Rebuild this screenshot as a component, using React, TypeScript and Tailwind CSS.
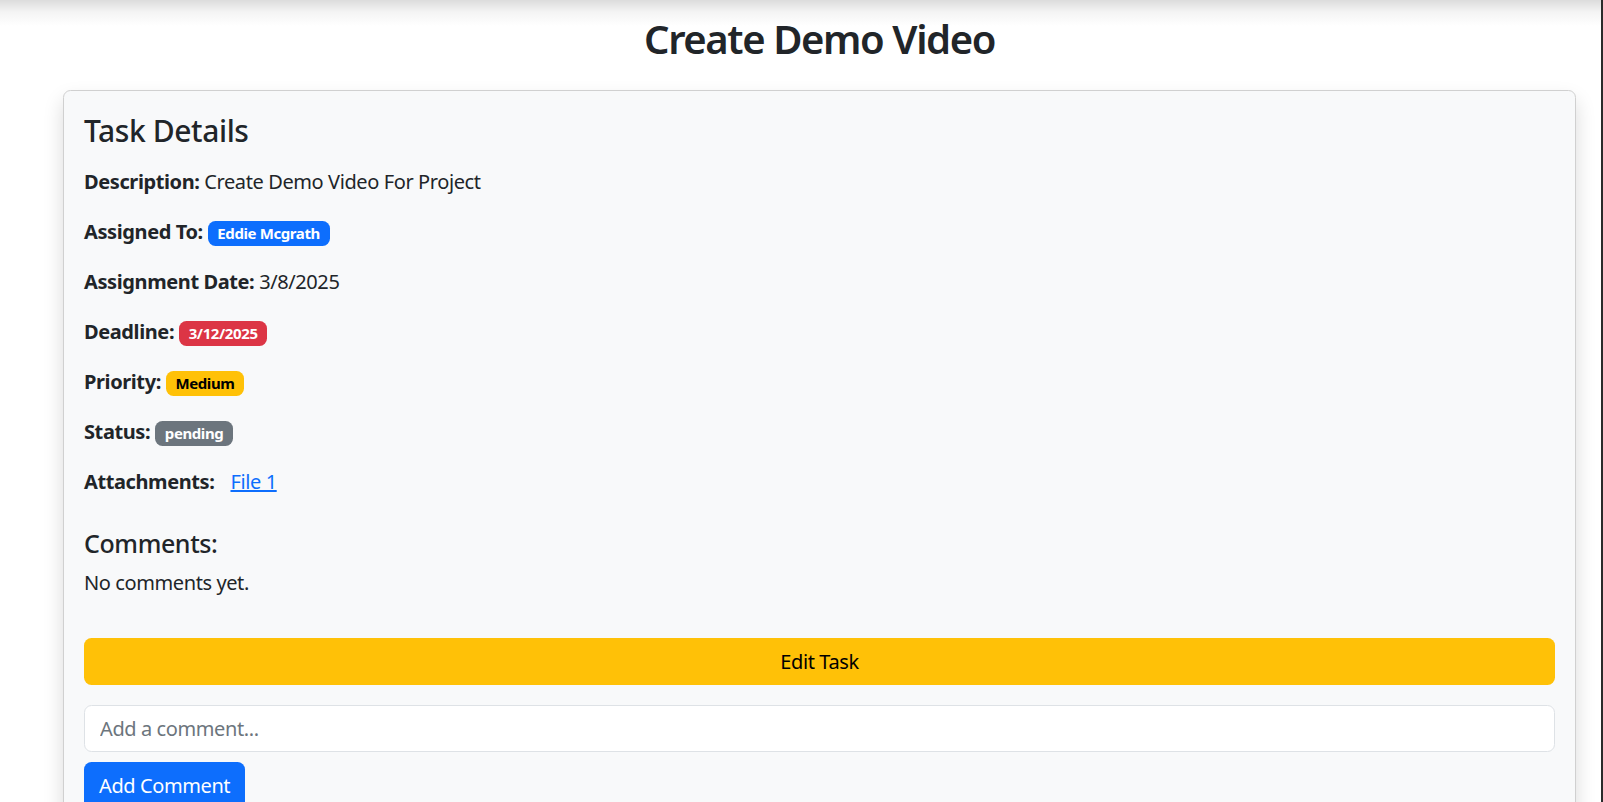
import React from "react";

const font = { fontFamily: '"Noto Sans", "Open Sans", sans-serif' };

function Badge({ children, cls }: { children: React.ReactNode; cls: string }) {
  return (
    <span
      className={
        "inline-block px-[9.75px] py-[5.25px] text-[15px] font-bold leading-none rounded-[7.5px] align-baseline " +
        cls
      }
    >
      {children}
    </span>
  );
}

export default function App() {
  return (
    <div
      className="flex h-[802px] overflow-hidden bg-white text-[#212529] tracking-[-0.025em]"
      style={font}
    >
      <div className="flex-1 bg-[linear-gradient(to_bottom,#dcdcdc_0px,#f4f4f4_12px,#ffffff_26px)]">
        <div className="ml-[63px] w-[1513px]">
          <h2 className="mt-[15px] mb-[27px] text-center text-[40px] leading-[48px] font-semibold tracking-[-0.035em]">
            Create Demo Video
          </h2>
          <div className="rounded-[7.5px] border border-[#d0d0d0] bg-[#f8f9fa] p-5 shadow-[0_10px_20px_rgba(0,0,0,0.15)]">
            <h4 className="mt-[2px] mb-[18px] text-[30px] leading-[36px] font-medium">Task Details</h4>
            <p className="mb-5 text-[20px] leading-[30px]">
              <strong className="font-bold">Description:</strong> Create Demo Video For Project
            </p>
            <p className="mb-5 text-[20px] leading-[30px]">
              <strong className="font-bold">Assigned To:</strong>{" "}
              <Badge cls="bg-[#0d6efd] text-white">Eddie Mcgrath</Badge>
            </p>
            <p className="mb-5 text-[20px] leading-[30px]">
              <strong className="font-bold">Assignment Date:</strong> 3/8/2025
            </p>
            <p className="mb-5 text-[20px] leading-[30px]">
              <strong className="font-bold">Deadline:</strong>{" "}
              <Badge cls="bg-[#dc3545] text-white">3/12/2025</Badge>
            </p>
            <p className="mb-5 text-[20px] leading-[30px]">
              <strong className="font-bold">Priority:</strong>{" "}
              <Badge cls="bg-[#ffc107] text-black">Medium</Badge>
            </p>
            <p className="mb-5 text-[20px] leading-[30px]">
              <strong className="font-bold">Status:</strong>{" "}
              <Badge cls="bg-[#6c757d] text-white">pending</Badge>
            </p>
            <p className="mb-5 text-[20px] leading-[30px]">
              <strong className="font-bold">Attachments:</strong>
              <a href="#" className="ml-[16px] text-[#0d6efd] underline">
                File 1
              </a>
            </p>
            <h5 className="mt-[31px] mb-[10px] text-[25px] leading-[30px] font-medium">Comments:</h5>
            <p className="text-[20px] leading-[30px]">No comments yet.</p>
            <button className="mt-10 block h-[47px] w-full rounded-[7.5px] bg-[#ffc107] text-[20px] leading-[30px] text-black">
              Edit Task
            </button>
            <input
              className="mt-5 block h-[47px] w-full rounded-[7.5px] border border-[#dee2e6] bg-white px-[15px] text-[20px] outline-none placeholder:text-[#6c757d]"
              placeholder="Add a comment..."
            />
            <button className="mt-[10px] block h-[47px] rounded-[7.5px] bg-[#0d6efd] px-[15px] text-[20px] leading-[30px] text-white">
              Add Comment
            </button>
          </div>
        </div>
      </div>
      <div className="w-[2px] bg-[#2b2b2b]" />
    </div>
  );
}
